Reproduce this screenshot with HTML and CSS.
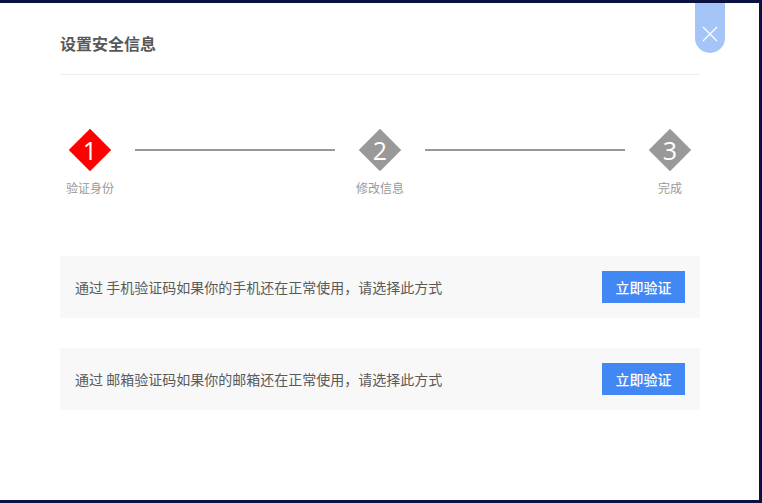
FILE: index.html
```html
<!DOCTYPE html>
<html lang="zh-CN">
<head>
<meta charset="utf-8">
<title>设置安全信息</title>
<link rel="stylesheet" href="styles.css">
</head>
<body>
<div class="modal">
  <div class="close-btn" aria-label="关闭">
    <svg width="16" height="16" viewBox="0 0 16 16"><path d="M1 1 L15 15 M15 1 L1 15" stroke="#fff" stroke-width="1.2" fill="none"/></svg>
  </div>
  <div class="content">
    <div class="header">设置安全信息</div>
    <div class="steps">
      <div class="step">
        <div class="diamond-box"><div class="diamond active"></div><span class="num">1</span></div>
        <div class="step-label">验证身份</div>
      </div>
      <div class="line"></div>
      <div class="step">
        <div class="diamond-box"><div class="diamond"></div><span class="num">2</span></div>
        <div class="step-label">修改信息</div>
      </div>
      <div class="line"></div>
      <div class="step">
        <div class="diamond-box"><div class="diamond"></div><span class="num">3</span></div>
        <div class="step-label">完成</div>
      </div>
    </div>
    <div class="options">
      <div class="option">
        <span class="option-text">通过 手机验证码如果你的手机还在正常使用，请选择此方式</span>
        <button class="verify-btn">立即验证</button>
      </div>
      <div class="option">
        <span class="option-text">通过 邮箱验证码如果你的邮箱还在正常使用，请选择此方式</span>
        <button class="verify-btn">立即验证</button>
      </div>
    </div>
  </div>
</div>
</body>
</html>
```
FILE: styles.css
```css
html, body {
  margin: 0;
  padding: 0;
}
body {
  background: #0b1140;
  width: 762px;
  height: 503px;
  overflow: hidden;
  font-family: "Noto Sans CJK SC", "Noto Sans", sans-serif;
}
.modal {
  position: relative;
  margin-top: 3px;
  width: 759px;
  height: 497px;
  background: #fff;
}
.close-btn {
  position: absolute;
  top: 0;
  left: 695px;
  width: 30px;
  height: 50px;
  background: #a5c5f8;
  border-radius: 0 0 15px 15px;
  display: flex;
  align-items: flex-end;
  justify-content: center;
  box-sizing: border-box;
}
.close-btn svg {
  margin-bottom: 11px;
}
.content {
  padding: 0 59px 0 60px;
}
.header {
  padding-top: 29px;
  height: 22px;
  line-height: 22px;
  padding-bottom: 20px;
  font-size: 16px;
  font-weight: 700;
  color: #585858;
  border-bottom: 1px solid #eeeeee;
}
.steps {
  display: grid;
  grid-template-columns: 60px 1fr 60px 1fr 60px;
  margin-top: 54px;
}
.step {
  display: flex;
  flex-direction: column;
  align-items: center;
}
.diamond-box {
  position: relative;
  width: 42px;
  height: 42px;
  display: flex;
  align-items: center;
  justify-content: center;
}
.diamond {
  width: 30px;
  height: 30px;
  background: #999;
  transform: rotate(45deg);
}
.diamond.active {
  background: #ff0000;
}
.num {
  position: absolute;
  inset: 0;
  display: flex;
  align-items: center;
  justify-content: center;
  color: #fff;
  font-family: "Open Sans", "DejaVu Sans", sans-serif;
  font-size: 25px;
  font-weight: 400;
  line-height: 1;
}
.step-label {
  margin-top: 9px;
  font-size: 12px;
  line-height: 16px;
  color: #999;
  white-space: nowrap;
}
.line {
  height: 2px;
  background: #999;
  margin: 20px 15px 0;
}
.options {
  margin-top: 60px;
  display: flex;
  flex-direction: column;
  gap: 30px;
}
.option {
  height: 62px;
  background: #f8f8f8;
  display: flex;
  align-items: center;
  justify-content: space-between;
  padding: 0 15px;
}
.option-text {
  font-size: 14px;
  color: #5a5a5a;
}
.verify-btn {
  width: 83px;
  height: 32px;
  border: none;
  background: #4288f5;
  color: #fff;
  font-family: "Noto Sans CJK SC", sans-serif;
  font-size: 14px;
  font-weight: 500;
  padding: 0;
  cursor: pointer;
}
```
